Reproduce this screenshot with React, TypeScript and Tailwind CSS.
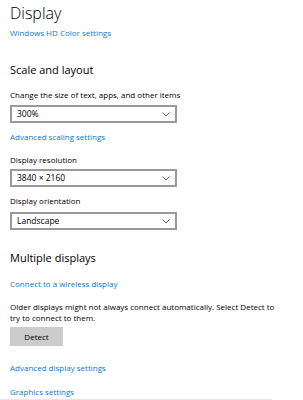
function Chevron() {
  return (
    <svg className="h-[5px] w-[8px]" viewBox="0 0 8 5" fill="none">
      <path d="M0.5 0.5L4 4L7.5 0.5" stroke="#666" strokeWidth={1} />
    </svg>
  );
}

function Select({ value, className }: { value: string; className: string }) {
  return (
    <div
      className={`flex h-[18px] w-[167px] items-center justify-between border-2 border-[#999] bg-white pl-[5px] pr-[5px] text-[8.5px] text-black ${className}`}
    >
      <span>{value}</span>
      <Chevron />
    </div>
  );
}

function Link({ children, className }: { children: string; className: string }) {
  return (
    <a className={`block text-[8px] leading-[12px] text-[#0a78d4] ${className}`}>
      {children}
    </a>
  );
}

export default function App() {
  return (
    <div
      className="relative h-[400px] w-[303px] overflow-hidden bg-white px-[10px] pt-[3px] text-black"
      style={{ fontFamily: '"Open Sans", "Noto Sans", sans-serif' }}
    >
      <h1 className="text-[16px] font-light leading-[20px]">Display</h1>
      <Link className="mt-[4px]">Windows HD Color settings</Link>

      <h2 className="mt-[23px] text-[11px] leading-[16px]">Scale and layout</h2>
      <p className="mt-[11px] text-[8px] leading-[12px]">
        Change the size of text, apps, and other items
      </p>
      <Select value="300%" className="mt-[4px]" />
      <Link className="mt-[8px]">Advanced scaling settings</Link>

      <p className="mt-[11px] text-[8px] leading-[12px]">Display resolution</p>
      <Select value="3840 × 2160" className="mt-[3px]" />

      <p className="mt-[8px] text-[8px] leading-[12px]">Display orientation</p>
      <Select value="Landscape" className="mt-[5px]" />

      <h2 className="mt-[20px] text-[11px] leading-[16px]">Multiple displays</h2>
      <Link className="mt-[12px]">Connect to a wireless display</Link>

      <p className="mt-[11px] w-[275px] text-[8px] leading-[11px]">
        Older displays might not always connect automatically. Select Detect to
        try to connect to them.
      </p>
      <button className="mt-[4px] block h-[19px] w-[53px] bg-[#cccccc] text-[8px] text-black">
        Detect
      </button>

      <Link className="mt-[16px]">Advanced display settings</Link>
      <Link className="mt-[12px]">Graphics settings</Link>

      <div className="absolute bottom-0 left-0 h-px w-[272px] bg-[#e6e6e6]" />
    </div>
  );
}
